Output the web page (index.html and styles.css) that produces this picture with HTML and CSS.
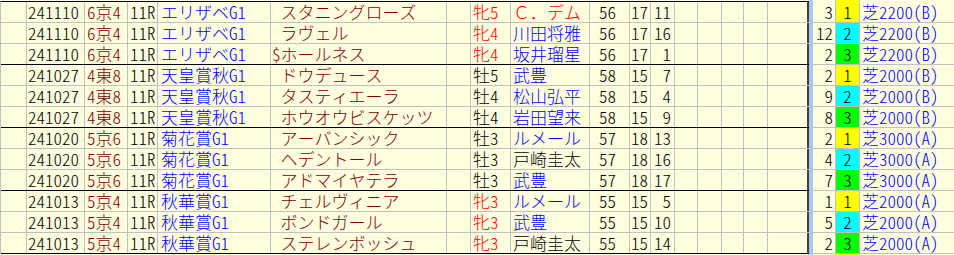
FILE: index.html
```html
<!DOCTYPE html>
<html lang="ja">
<head>
<meta charset="utf-8">
<link rel="stylesheet" href="styles.css">
</head>
<body>
<div class="wrap">
  <div class="left">
    <div class="row">
      <div class="c c0"></div><div class="c date h">241110</div><div class="c place"><span class="h">6</span>京<span class="h">4</span></div><div class="c rno h">11R</div><div class="c rname">エリザベ<span class="h">G1</span></div><div class="c horse"><span class="mk"></span>スタニングローズ</div><div class="c gap"></div><div class="c sex f">牝<span class="h">5</span></div><div class="c jockey r">Ｃ．デム</div><div class="c wt h">56</div><div class="c n1 h">17</div><div class="c n2 h">11</div><div class="c e1"></div><div class="c e2"></div><div class="c e3"></div><div class="c e4"></div><div class="c e5"></div>
    </div>
    <div class="row">
      <div class="c c0"></div><div class="c date h">241110</div><div class="c place"><span class="h">6</span>京<span class="h">4</span></div><div class="c rno h">11R</div><div class="c rname">エリザベ<span class="h">G1</span></div><div class="c horse"><span class="mk"></span>ラヴェル</div><div class="c gap"></div><div class="c sex f">牝<span class="h">4</span></div><div class="c jockey b">川田将雅</div><div class="c wt h">56</div><div class="c n1 h">17</div><div class="c n2 h">16</div><div class="c e1"></div><div class="c e2"></div><div class="c e3"></div><div class="c e4"></div><div class="c e5"></div>
    </div>
    <div class="row grp">
      <div class="c c0"></div><div class="c date h">241110</div><div class="c place"><span class="h">6</span>京<span class="h">4</span></div><div class="c rno h">11R</div><div class="c rname">エリザベ<span class="h">G1</span></div><div class="c horse"><span class="mk h">$</span>ホールネス</div><div class="c gap"></div><div class="c sex f">牝<span class="h">4</span></div><div class="c jockey b">坂井瑠星</div><div class="c wt h">56</div><div class="c n1 h">17</div><div class="c n2 h">1</div><div class="c e1"></div><div class="c e2"></div><div class="c e3"></div><div class="c e4"></div><div class="c e5"></div>
    </div>
    <div class="row">
      <div class="c c0"></div><div class="c date h">241027</div><div class="c place"><span class="h">4</span>東<span class="h">8</span></div><div class="c rno h">11R</div><div class="c rname">天皇賞秋<span class="h">G1</span></div><div class="c horse"><span class="mk"></span>ドウデュース</div><div class="c gap"></div><div class="c sex">牡<span class="h">5</span></div><div class="c jockey b">武豊</div><div class="c wt h">58</div><div class="c n1 h">15</div><div class="c n2 h">7</div><div class="c e1"></div><div class="c e2"></div><div class="c e3"></div><div class="c e4"></div><div class="c e5"></div>
    </div>
    <div class="row">
      <div class="c c0"></div><div class="c date h">241027</div><div class="c place"><span class="h">4</span>東<span class="h">8</span></div><div class="c rno h">11R</div><div class="c rname">天皇賞秋<span class="h">G1</span></div><div class="c horse"><span class="mk"></span>タスティエーラ</div><div class="c gap"></div><div class="c sex">牡<span class="h">4</span></div><div class="c jockey b">松山弘平</div><div class="c wt h">58</div><div class="c n1 h">15</div><div class="c n2 h">4</div><div class="c e1"></div><div class="c e2"></div><div class="c e3"></div><div class="c e4"></div><div class="c e5"></div>
    </div>
    <div class="row grp">
      <div class="c c0"></div><div class="c date h">241027</div><div class="c place"><span class="h">4</span>東<span class="h">8</span></div><div class="c rno h">11R</div><div class="c rname">天皇賞秋<span class="h">G1</span></div><div class="c horse"><span class="mk"></span>ホウオウビスケッツ</div><div class="c gap"></div><div class="c sex">牡<span class="h">4</span></div><div class="c jockey b">岩田望来</div><div class="c wt h">58</div><div class="c n1 h">15</div><div class="c n2 h">9</div><div class="c e1"></div><div class="c e2"></div><div class="c e3"></div><div class="c e4"></div><div class="c e5"></div>
    </div>
    <div class="row">
      <div class="c c0"></div><div class="c date h">241020</div><div class="c place"><span class="h">5</span>京<span class="h">6</span></div><div class="c rno h">11R</div><div class="c rname">菊花賞<span class="h">G1</span></div><div class="c horse"><span class="mk"></span>アーバンシック</div><div class="c gap"></div><div class="c sex">牡<span class="h">3</span></div><div class="c jockey b">ルメール</div><div class="c wt h">57</div><div class="c n1 h">18</div><div class="c n2 h">13</div><div class="c e1"></div><div class="c e2"></div><div class="c e3"></div><div class="c e4"></div><div class="c e5"></div>
    </div>
    <div class="row">
      <div class="c c0"></div><div class="c date h">241020</div><div class="c place"><span class="h">5</span>京<span class="h">6</span></div><div class="c rno h">11R</div><div class="c rname">菊花賞<span class="h">G1</span></div><div class="c horse"><span class="mk"></span>ヘデントール</div><div class="c gap"></div><div class="c sex">牡<span class="h">3</span></div><div class="c jockey">戸崎圭太</div><div class="c wt h">57</div><div class="c n1 h">18</div><div class="c n2 h">16</div><div class="c e1"></div><div class="c e2"></div><div class="c e3"></div><div class="c e4"></div><div class="c e5"></div>
    </div>
    <div class="row grp">
      <div class="c c0"></div><div class="c date h">241020</div><div class="c place"><span class="h">5</span>京<span class="h">6</span></div><div class="c rno h">11R</div><div class="c rname">菊花賞<span class="h">G1</span></div><div class="c horse"><span class="mk"></span>アドマイヤテラ</div><div class="c gap"></div><div class="c sex">牡<span class="h">3</span></div><div class="c jockey b">武豊</div><div class="c wt h">57</div><div class="c n1 h">18</div><div class="c n2 h">17</div><div class="c e1"></div><div class="c e2"></div><div class="c e3"></div><div class="c e4"></div><div class="c e5"></div>
    </div>
    <div class="row">
      <div class="c c0"></div><div class="c date h">241013</div><div class="c place"><span class="h">5</span>京<span class="h">4</span></div><div class="c rno h">11R</div><div class="c rname">秋華賞<span class="h">G1</span></div><div class="c horse"><span class="mk"></span>チェルヴィニア</div><div class="c gap"></div><div class="c sex f">牝<span class="h">3</span></div><div class="c jockey b">ルメール</div><div class="c wt h">55</div><div class="c n1 h">15</div><div class="c n2 h">5</div><div class="c e1"></div><div class="c e2"></div><div class="c e3"></div><div class="c e4"></div><div class="c e5"></div>
    </div>
    <div class="row">
      <div class="c c0"></div><div class="c date h">241013</div><div class="c place"><span class="h">5</span>京<span class="h">4</span></div><div class="c rno h">11R</div><div class="c rname">秋華賞<span class="h">G1</span></div><div class="c horse"><span class="mk"></span>ボンドガール</div><div class="c gap"></div><div class="c sex f">牝<span class="h">3</span></div><div class="c jockey b">武豊</div><div class="c wt h">55</div><div class="c n1 h">15</div><div class="c n2 h">10</div><div class="c e1"></div><div class="c e2"></div><div class="c e3"></div><div class="c e4"></div><div class="c e5"></div>
    </div>
    <div class="row grp">
      <div class="c c0"></div><div class="c date h">241013</div><div class="c place"><span class="h">5</span>京<span class="h">4</span></div><div class="c rno h">11R</div><div class="c rname">秋華賞<span class="h">G1</span></div><div class="c horse"><span class="mk"></span>ステレンボッシュ</div><div class="c gap"></div><div class="c sex f">牝<span class="h">3</span></div><div class="c jockey">戸崎圭太</div><div class="c wt h">55</div><div class="c n1 h">15</div><div class="c n2 h">14</div><div class="c e1"></div><div class="c e2"></div><div class="c e3"></div><div class="c e4"></div><div class="c e5"></div>
    </div>
  </div>
  <div class="sep"></div>
  <div class="right">
    <div class="rrow first"><div class="c num h">3</div><div class="c badge y h">1</div><div class="c course">芝<span class="h">2200(B)</span></div></div>
    <div class="rrow"><div class="c num h">12</div><div class="c badge cy h">2</div><div class="c course">芝<span class="h">2200(B)</span></div></div>
    <div class="rrow"><div class="c num h">2</div><div class="c badge g h">3</div><div class="c course">芝<span class="h">2200(B)</span></div></div>
    <div class="rrow"><div class="c num h">2</div><div class="c badge y h">1</div><div class="c course">芝<span class="h">2000(B)</span></div></div>
    <div class="rrow"><div class="c num h">9</div><div class="c badge cy h">2</div><div class="c course">芝<span class="h">2000(B)</span></div></div>
    <div class="rrow"><div class="c num h">8</div><div class="c badge g h">3</div><div class="c course">芝<span class="h">2000(B)</span></div></div>
    <div class="rrow"><div class="c num h">2</div><div class="c badge y h">1</div><div class="c course">芝<span class="h">3000(A)</span></div></div>
    <div class="rrow"><div class="c num h">4</div><div class="c badge cy h">2</div><div class="c course">芝<span class="h">3000(A)</span></div></div>
    <div class="rrow"><div class="c num h">7</div><div class="c badge g h">3</div><div class="c course">芝<span class="h">3000(A)</span></div></div>
    <div class="rrow"><div class="c num h">1</div><div class="c badge y h">1</div><div class="c course">芝<span class="h">2000(A)</span></div></div>
    <div class="rrow"><div class="c num h">5</div><div class="c badge cy h">2</div><div class="c course">芝<span class="h">2000(A)</span></div></div>
    <div class="rrow"><div class="c num h">2</div><div class="c badge g h">3</div><div class="c course">芝<span class="h">2000(A)</span></div></div>
    <div class="rrow last"><div class="c num"></div><div class="c badge y"></div><div class="c course"></div></div>
  </div>
</div>
</body>
</html>
```
FILE: styles.css
```css
html, body {
  margin: 0;
  padding: 0;
  background: #ffffe0;
  overflow: hidden;
}
body {
  width: 954px;
  height: 255px;
  font-family: "Noto Sans CJK JP", sans-serif;
  font-size: 17px;
  font-weight: 300;
  font-kerning: none;
  color: #000;
}
.h {
  font-feature-settings: "hwid" 1;
}
.wrap {
  display: flex;
  align-items: flex-start;
  width: 954px;
  height: 255px;
  overflow: hidden;
}
.left {
  margin-top: 1px;
  border-top: 1px solid #000;
  border-left: 1px solid #c0c0c0;
  flex: none;
}
.row {
  display: flex;
  height: 21px;
  box-sizing: border-box;
  border-bottom: 1px solid #c0c0c0;
}
.row.grp {
  border-bottom-color: #000;
}
.c {
  box-sizing: border-box;
  height: 100%;
  border-right: 1px solid #c0c0c0;
  line-height: 19px;
  white-space: nowrap;
  padding-left: 1px;
  flex: none;
}
.c0 { width: 26px; }
.date { width: 58px; padding-left: 1px; }
.place { width: 43px; color: #800000; padding-left: 2px; }
.rno { width: 30px; padding-left: 2px; }
.rname { width: 113px; color: #0000ff; padding-left: 3px; }
.horse { width: 176px; color: #800000; padding-left: 1px; }
.mk { display: inline-block; width: 8.5px; }
.gap { width: 24px; }
.sex { width: 40px; padding-left: 2px; }
.sex.f { color: #ff0000; }
.jockey { width: 79px; padding-left: 2px; }
.jockey.b { color: #0000ff; }
.jockey.r { color: #ff0000; }
.wt { width: 40px; padding-left: 9px; }
.n1 { width: 21px; padding-left: 1px; }
.n2 { width: 24px; text-align: right; padding-right: 3px; }
.e1 { width: 23px; }
.e2 { width: 24px; }
.e3 { width: 22px; }
.e4 { width: 24px; }
.e5 { width: 41px; border-right: 2px solid #404040; }
.sep {
  flex: none;
  width: 4px;
  height: 255px;
  background: #a6c8ee;
}
.right {
  flex: 1;
}
.rrow {
  display: flex;
  height: 21px;
  box-sizing: border-box;
  border-bottom: 1px solid #c0c0c0;
}
.rrow.first {
  height: 23px;
}
.rrow.first .c {
  line-height: 23px;
}
.rrow.last {
  height: 2px;
  border-bottom: none;
  overflow: hidden;
}
.num { width: 23px; text-align: right; padding-right: 2px; }
.badge { width: 24px; text-align: center; padding-left: 0; }
.badge.y { background: #ffff00; }
.badge.cy { background: #00ffff; }
.badge.g { background: #00ff00; }
.course { flex: 1; border-right: none; color: #0000ff; padding-left: 2px; }
```
